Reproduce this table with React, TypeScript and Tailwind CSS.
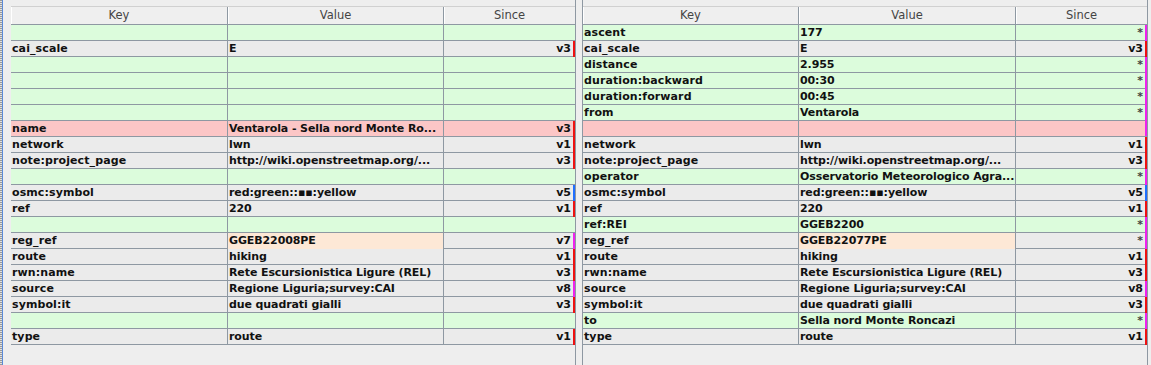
type Row = {
  k: string;
  v: string;
  s: string;
  bg: 'g' | 'n' | 'p';
  peach?: boolean;
  mark?: 'r' | 'b' | 'm';
};

const rowBg = {
  g: 'bg-[#dcfcdc]',
  n: 'bg-[#ebebeb]',
  p: 'bg-[#fcc6c6]',
};

const markBg = {
  r: 'bg-[#ee1111]',
  b: 'bg-[#1f6fff]',
  m: 'bg-[#ee22ee]',
};

const E = (): Row => ({ k: '', v: '', s: '', bg: 'g' });

const leftRows: Row[] = [
  E(),
  { k: 'cai_scale', v: 'E', s: 'v3', bg: 'n', mark: 'r' },
  E(),
  E(),
  E(),
  E(),
  { k: 'name', v: 'Ventarola - Sella nord Monte Ro...', s: 'v3', bg: 'p', mark: 'r' },
  { k: 'network', v: 'lwn', s: 'v1', bg: 'n', mark: 'r' },
  { k: 'note:project_page', v: 'http://wiki.openstreetmap.org/...', s: 'v3', bg: 'n', mark: 'r' },
  E(),
  { k: 'osmc:symbol', v: 'red:green::▪▪:yellow', s: 'v5', bg: 'n', mark: 'b' },
  { k: 'ref', v: '220', s: 'v1', bg: 'n', mark: 'r' },
  E(),
  { k: 'reg_ref', v: 'GGEB22008PE', s: 'v7', bg: 'n', peach: true, mark: 'm' },
  { k: 'route', v: 'hiking', s: 'v1', bg: 'n', mark: 'r' },
  { k: 'rwn:name', v: 'Rete Escursionistica Ligure (REL)', s: 'v3', bg: 'n', mark: 'r' },
  { k: 'source', v: 'Regione Liguria;survey:CAI', s: 'v8', bg: 'n', mark: 'm' },
  { k: 'symbol:it', v: 'due quadrati gialli', s: 'v3', bg: 'n', mark: 'r' },
  E(),
  { k: 'type', v: 'route', s: 'v1', bg: 'n', mark: 'r' },
];

const rightRows: Row[] = [
  { k: 'ascent', v: '177', s: '*', bg: 'g', mark: 'm' },
  { k: 'cai_scale', v: 'E', s: 'v3', bg: 'n', mark: 'r' },
  { k: 'distance', v: '2.955', s: '*', bg: 'g', mark: 'm' },
  { k: 'duration:backward', v: '00:30', s: '*', bg: 'g', mark: 'm' },
  { k: 'duration:forward', v: '00:45', s: '*', bg: 'g', mark: 'm' },
  { k: 'from', v: 'Ventarola', s: '*', bg: 'g', mark: 'm' },
  { k: '', v: '', s: '', bg: 'p', mark: 'm' },
  { k: 'network', v: 'lwn', s: 'v1', bg: 'n', mark: 'r' },
  { k: 'note:project_page', v: 'http://wiki.openstreetmap.org/...', s: 'v3', bg: 'n', mark: 'r' },
  { k: 'operator', v: 'Osservatorio Meteorologico Agra...', s: '*', bg: 'g', mark: 'm' },
  { k: 'osmc:symbol', v: 'red:green::▪▪:yellow', s: 'v5', bg: 'n', mark: 'b' },
  { k: 'ref', v: '220', s: 'v1', bg: 'n', mark: 'r' },
  { k: 'ref:REI', v: 'GGEB2200', s: '*', bg: 'g', mark: 'm' },
  { k: 'reg_ref', v: 'GGEB22077PE', s: '*', bg: 'n', peach: true, mark: 'm' },
  { k: 'route', v: 'hiking', s: 'v1', bg: 'n', mark: 'r' },
  { k: 'rwn:name', v: 'Rete Escursionistica Ligure (REL)', s: 'v3', bg: 'n', mark: 'r' },
  { k: 'source', v: 'Regione Liguria;survey:CAI', s: 'v8', bg: 'n', mark: 'm' },
  { k: 'symbol:it', v: 'due quadrati gialli', s: 'v3', bg: 'n', mark: 'r' },
  { k: 'to', v: 'Sella nord Monte Roncazi', s: '*', bg: 'g', mark: 'm' },
  { k: 'type', v: 'route', s: 'v1', bg: 'n', mark: 'r' },
];

function TagTable({ rows, cols }: { rows: Row[]; cols: string }) {
  return (
    <div className="flex flex-col">
      {/* header */}
      <div className={`grid ${cols} h-[19px] border-t border-b border-t-[#d0d0d0] border-b-[#8e98a2] bg-[#efefef] text-[11.5px] text-[#444] font-normal`}>
        <div className="flex items-center justify-center border-r border-[#8e98a2] shadow-[inset_1px_0_0_#fff]">Key</div>
        <div className="flex items-center justify-center border-r border-[#8e98a2] shadow-[inset_1px_0_0_#fff]">Value</div>
        <div className="flex items-center justify-center shadow-[inset_1px_0_0_#fff]">Since</div>
      </div>
      {rows.map((r, i) => (
        <div key={i} className={`grid ${cols} h-[16px] border-b border-[#8e98a2] ${rowBg[r.bg]} text-[11px] font-bold text-[#111] leading-[16px]`}>
          <div className="border-r border-[#8e98a2] pl-[1px] whitespace-nowrap tracking-[0.1px]">{r.k}</div>
          <div className={`border-r border-[#8e98a2] pl-[1px] whitespace-nowrap tracking-[-0.1px] ${r.peach ? 'bg-[#fde8d6]' : ''}`}>{r.v}</div>
          <div className="flex justify-end items-stretch">
            <span className={r.s === '*' ? 'pr-[2px] text-[#444]' : 'pr-[2px]'}>{r.s}</span>
            {r.mark ? <span className={`w-[2px] ${markBg[r.mark]}`} /> : <span className="w-[2px]" />}
          </div>
        </div>
      ))}
    </div>
  );
}

export default function App() {
  return (
    <div className="flex w-[1151px] h-[365px] bg-[#eeeeee] font-['DejaVu_Sans',sans-serif] overflow-hidden">
      {/* left edge */}
      <div className="w-[2px] h-full bg-[repeating-linear-gradient(0deg,#9a9a9a_0px,#9a9a9a_1px,#e0e0e0_1px,#e0e0e0_2px)]" />
      <div className="w-[1px] h-full bg-[#5b8ad8]" />

      {/* left pane */}
      <div className="w-[573px] h-full pl-[8px] pt-[6px] border-r border-[#8e98a2]">
        <TagTable rows={leftRows} cols="grid-cols-[217px_216px_131px]" />
      </div>

      <div className="w-[6px] h-full" />

      {/* right pane */}
      <div className="w-[566px] h-full pt-[6px] border-l border-r border-[#8e98a2]">
        <TagTable rows={rightRows} cols="grid-cols-[216px_217px_131px]" />
      </div>
    </div>
  );
}
